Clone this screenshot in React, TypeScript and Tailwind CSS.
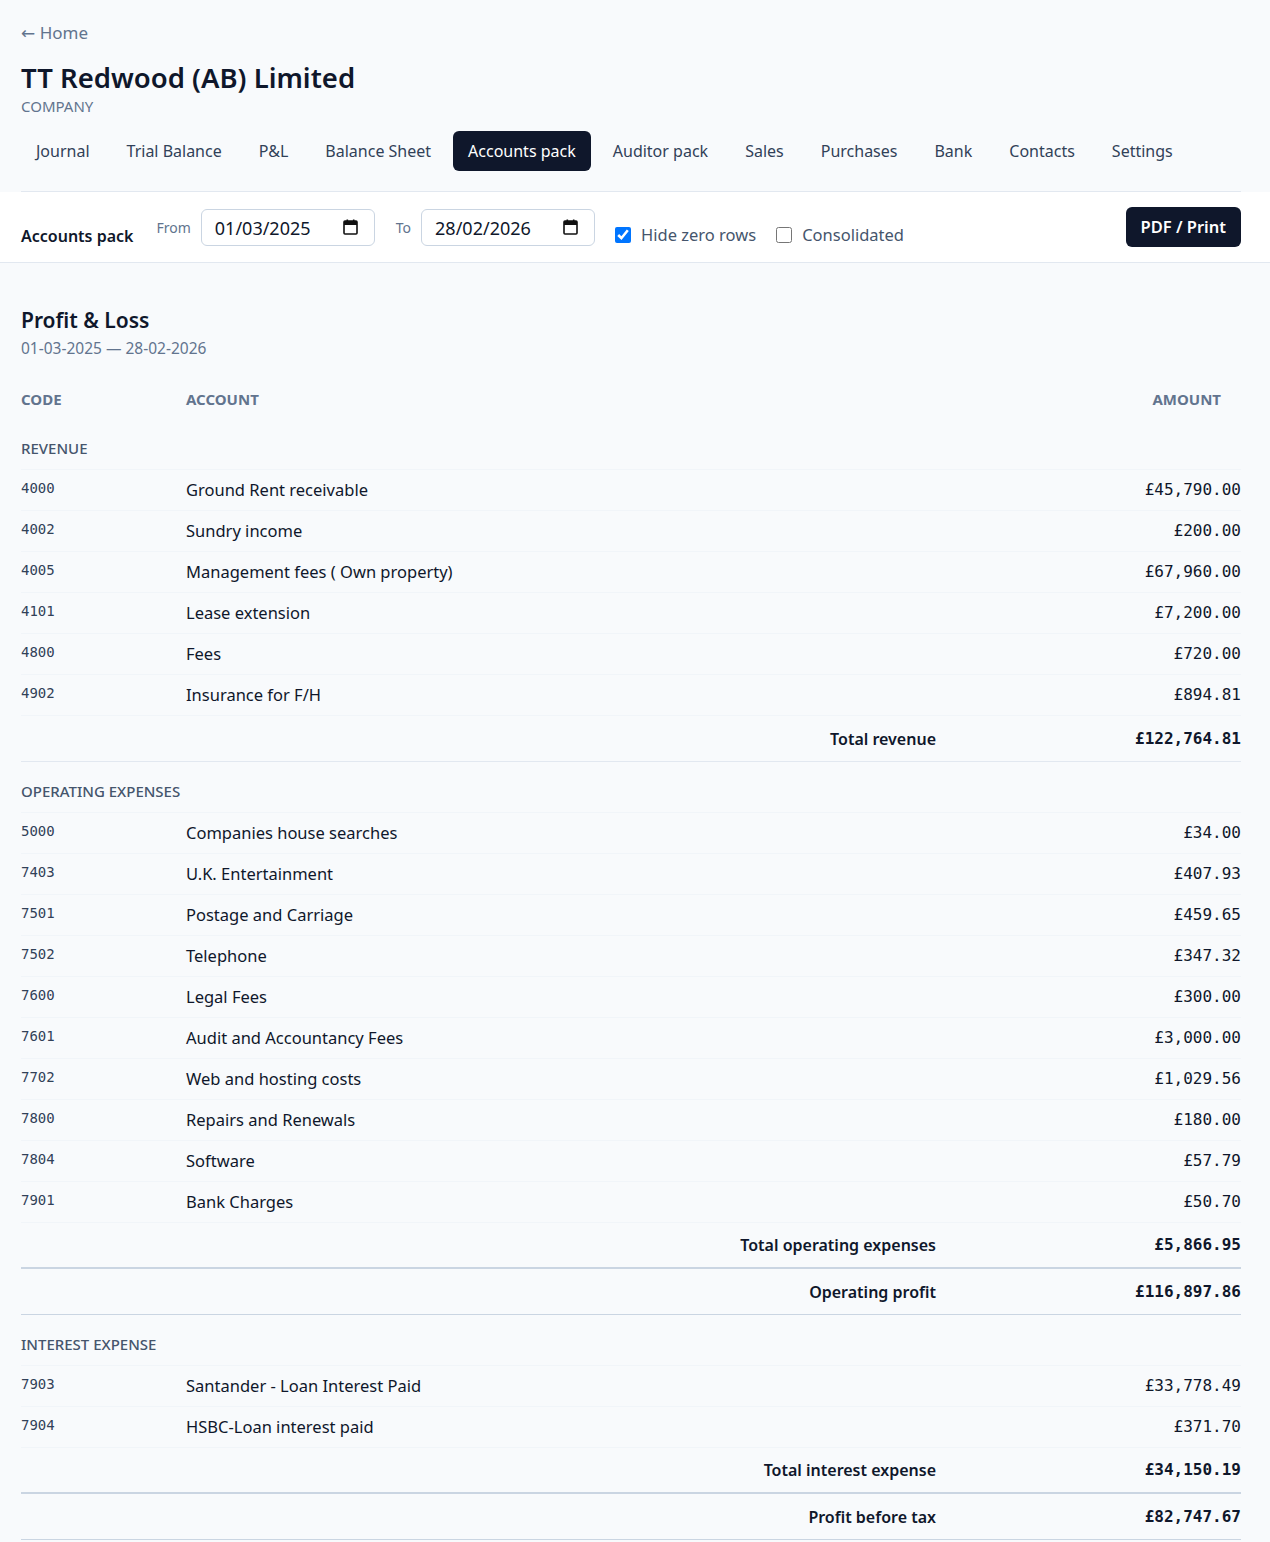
const tabs = [
  "Journal",
  "Trial Balance",
  "P&L",
  "Balance Sheet",
  "Accounts pack",
  "Auditor pack",
  "Sales",
  "Purchases",
  "Bank",
  "Contacts",
  "Settings",
];

type Line = { code: string; name: string; amount: string };

const revenue: Line[] = [
  { code: "4000", name: "Ground Rent receivable", amount: "£45,790.00" },
  { code: "4002", name: "Sundry income", amount: "£200.00" },
  { code: "4005", name: "Management fees ( Own property)", amount: "£67,960.00" },
  { code: "4101", name: "Lease extension", amount: "£7,200.00" },
  { code: "4800", name: "Fees", amount: "£720.00" },
  { code: "4902", name: "Insurance for F/H", amount: "£894.81" },
];

const expenses: Line[] = [
  { code: "5000", name: "Companies house searches", amount: "£34.00" },
  { code: "7403", name: "U.K. Entertainment", amount: "£407.93" },
  { code: "7501", name: "Postage and Carriage", amount: "£459.65" },
  { code: "7502", name: "Telephone", amount: "£347.32" },
  { code: "7600", name: "Legal Fees", amount: "£300.00" },
  { code: "7601", name: "Audit and Accountancy Fees", amount: "£3,000.00" },
  { code: "7702", name: "Web and hosting costs", amount: "£1,029.56" },
  { code: "7800", name: "Repairs and Renewals", amount: "£180.00" },
  { code: "7804", name: "Software", amount: "£57.79" },
  { code: "7901", name: "Bank Charges", amount: "£50.70" },
];

const interest: Line[] = [
  { code: "7903", name: "Santander - Loan Interest Paid", amount: "£33,778.49" },
  { code: "7904", name: "HSBC-Loan interest paid", amount: "£371.70" },
];

const mono = "font-['DejaVu_Sans_Mono',monospace]";

function CalendarIcon() {
  return (
    <svg width="15" height="16" viewBox="0 0 15 16" fill="none">
      <rect x="1" y="2" width="13" height="13" rx="1" stroke="#111" strokeWidth="1.6" />
      <rect x="1" y="2" width="13" height="4" fill="#111" />
      <rect x="3.5" y="0.5" width="1.6" height="3" fill="#111" />
      <rect x="9.9" y="0.5" width="1.6" height="3" fill="#111" />
    </svg>
  );
}

function DateField({ value }: { value: string }) {
  return (
    <div className="flex items-center justify-between w-[174px] h-[37px] pl-[13px] pr-[16px] rounded-md border border-slate-300 bg-white text-[18px] text-slate-900">
      <span className="pt-[3px]">{value}</span>
      <CalendarIcon />
    </div>
  );
}

function Section({ title, lines, first }: { title: string; lines: Line[]; first?: boolean }) {
  return (
    <>
      <div
        className={`${
          first ? "h-[49px]" : "h-[51px]"
        } flex items-end pb-[10px] border-b border-slate-100 text-[15px] font-medium text-slate-600 uppercase`}
      >
        {title}
      </div>
      {lines.map((l) => (
        <div
          key={l.code}
          className="grid grid-cols-[165px_1fr_305px] items-center h-[41px] border-b border-slate-100"
        >
          <div className={`${mono} text-[14px] text-slate-700 -mt-[3px]`}>{l.code}</div>
          <div className="text-[16.5px] text-slate-900">{l.name}</div>
          <div className={`${mono} text-[16px] text-slate-900 text-right`}>{l.amount}</div>
        </div>
      ))}
    </>
  );
}

function TotalRow({
  label,
  amount,
  border,
}: {
  label: string;
  amount: string;
  border: string;
}) {
  return (
    <div className={`grid grid-cols-[1fr_305px] items-center h-[46px] ${border}`}>
      <div className="text-right text-[16px] font-semibold text-slate-900">{label}</div>
      <div className={`${mono} text-right text-[16px] font-bold text-slate-900`}>{amount}</div>
    </div>
  );
}

export default function App() {
  return (
    <div className="min-h-screen bg-slate-50 font-['Noto_Sans',sans-serif] text-slate-900">
      <div className="pl-[21px] pr-[29px]">
        <div className="pt-[20px] text-[17px] text-slate-500 leading-[26px]">
          <span className="font-['DejaVu_Sans',sans-serif]">←</span> Home
        </div>
        <h1 className="mt-[11px] text-[27.5px] font-semibold leading-[42px] text-slate-900">
          TT Redwood (AB) Limited
        </h1>
        <div className="text-[15px] text-slate-500 leading-[15px]">COMPANY</div>
        <nav className="flex items-center gap-[7px] pt-[17px] pb-[20px] border-b border-slate-200">
          {tabs.map((t) => (
            <span
              key={t}
              className={`h-[40px] flex items-center px-[15px] rounded-md text-[16px] ${
                t === "Accounts pack" ? "bg-slate-900 text-white" : "text-slate-700"
              }`}
            >
              {t}
            </span>
          ))}
        </nav>
      </div>

      <div className="bg-white border-b border-slate-200">
        <div className="flex items-center h-[70px] pl-[21px] pr-[29px]">
          <div className="mt-[18px] text-[16px] font-semibold text-slate-900">Accounts pack</div>
          <span className="ml-[23px] text-[14px] text-slate-500">From</span>
          <div className="ml-[10px]">
            <DateField value="01/03/2025" />
          </div>
          <span className="ml-[21px] text-[14px] text-slate-500">To</span>
          <div className="ml-[10px]">
            <DateField value="28/02/2026" />
          </div>
          <label className="ml-[20px] mt-[16px] flex items-center gap-[10px] text-[16.5px] text-slate-600">
            <input type="checkbox" defaultChecked className="w-4 h-4 m-0" />
            Hide zero rows
          </label>
          <label className="ml-[20px] mt-[16px] flex items-center gap-[10px] text-[16.5px] text-slate-600">
            <input type="checkbox" className="w-4 h-4 m-0" />
            Consolidated
          </label>
          <button className="ml-auto h-[40px] px-[15px] rounded-md bg-slate-900 text-white text-[16.5px] font-semibold">
            PDF / Print
          </button>
        </div>
      </div>

      <div className="pl-[21px] pr-[29px] pt-[42px] pb-[2px]">
        <h2 className="text-[21px] font-semibold leading-[30px]">Profit &amp; Loss</h2>
        <div className="text-[15.5px] text-slate-500 mt-[2px]">01-03-2025 — 28-02-2026</div>

        <div className="mt-[17px] grid grid-cols-[165px_1fr_305px] items-center h-[44px] text-[15px] font-bold text-slate-500 uppercase">
          <div>Code</div>
          <div>Account</div>
          <div className="text-right pr-5">Amount</div>
        </div>

        <Section title="Revenue" lines={revenue} first />
        <TotalRow label="Total revenue" amount="£122,764.81" border="border-b border-slate-200" />

        <Section title="Operating expenses" lines={expenses} />
        <TotalRow
          label="Total operating expenses"
          amount="£5,866.95"
          border="border-b-2 border-slate-300"
        />
        <TotalRow label="Operating profit" amount="£116,897.86" border="border-b border-slate-300" />

        <Section title="Interest expense" lines={interest} />
        <TotalRow
          label="Total interest expense"
          amount="£34,150.19"
          border="border-b-2 border-slate-300"
        />
        <TotalRow label="Profit before tax" amount="£82,747.67" border="border-b border-slate-300" />
      </div>
    </div>
  );
}
